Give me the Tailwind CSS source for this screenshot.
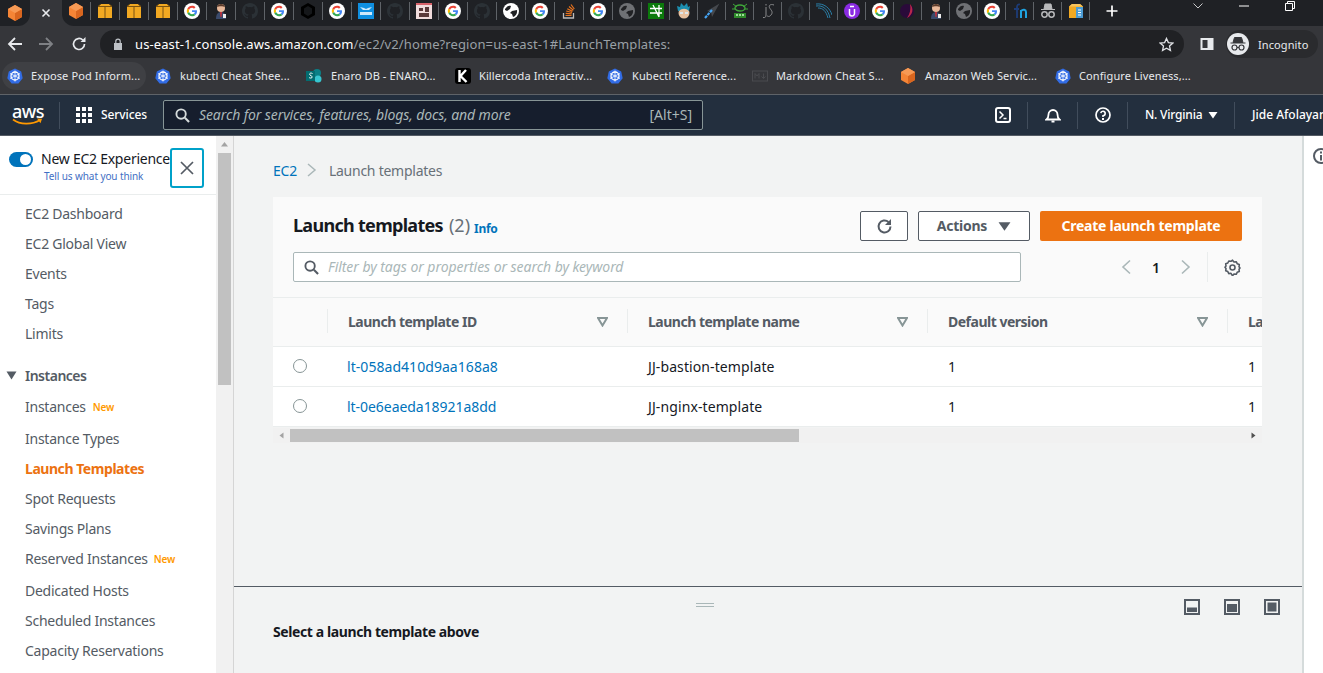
<!DOCTYPE html>
<html lang="en">
<head>
  <meta charset="UTF-8">
  <title>Launch templates | EC2 Management Console</title>
  <script src="https://cdn.jsdelivr.net/npm/@tailwindcss/browser@4"></script>
</head>
<body class="h-screen w-[1323px] overflow-hidden flex flex-col bg-white font-['Noto_Sans',sans-serif]">

  <!-- Icon sheet -->
  <svg class="hidden">
    <symbol id="cube" viewBox="0 0 16 16"><path d="M8 0 15 4v8l-7 4-7-4V4z" fill="#f58536"/><path d="M8 8l7-4v8l-7 4z" fill="#d9661f"/><path d="M8 0l7 4-7 4-7-4z" fill="#f79a55"/></symbol>
    <symbol id="box" viewBox="0 0 16 16"><path d="M1 3.500 4 1h8l3 2.500V15H1z" fill="#f2a922"/><path d="M1 3.500h14M8 3.500V15M4 1 1 3.500M12 1l3 2.500" stroke="#7a5312" stroke-width="1" fill="none"/></symbol>
    <symbol id="boxdoc" viewBox="0 0 16 16"><path d="M1 3.500 4 1h8l3 2.500V15H1z" fill="#f2a922"/><path d="M4 1h8l3 2.500H1z" fill="#f7c35c"/><path d="M8 4h7v11H8z" fill="#4a9bd4"/><path d="M10 7h3M10 9.500h3M10 12h3" stroke="#fff" stroke-width="1"/></symbol>
    <symbol id="g" viewBox="0 0 16 16"><circle cx="8" cy="8" r="8" fill="#fff"/><g transform="translate(2.800 2.800) scale(.217)"><path fill="#EA4335" d="M24 9.500c3.540 0 6.710 1.220 9.210 3.600l6.850-6.850C35.900 2.380 30.470 0 24 0 14.620 0 6.510 5.380 2.560 13.220l7.980 6.190C12.430 13.720 17.740 9.500 24 9.500z"/><path fill="#4285F4" d="M46.980 24.550c0-1.570-.15-3.090-.38-4.550H24v9.020h12.940c-.58 2.960-2.260 5.480-4.780 7.180l7.730 6c4.510-4.180 7.090-10.360 7.090-17.650z"/><path fill="#FBBC05" d="M10.530 28.590c-.48-1.450-.76-2.990-.76-4.590s.27-3.140.76-4.590l-7.980-6.190C.92 16.460 0 20.120 0 24c0 3.880.92 7.540 2.560 10.780l7.970-6.190z"/><path fill="#34A853" d="M24 48c6.480 0 11.930-2.130 15.890-5.810l-7.730-6c-2.150 1.450-4.920 2.300-8.160 2.300-6.260 0-11.570-4.220-13.470-9.910l-7.980 6.190C6.510 42.620 14.620 48 24 48z"/></g></symbol>
    <symbol id="gh" viewBox="0 0 16 16"><path fill="#2b3136" d="M8 0C3.580 0 0 3.580 0 8c0 3.540 2.290 6.530 5.470 7.590.4.070.55-.17.550-.38v-1.340c-2.220.48-2.690-1.070-2.690-1.070-.36-.92-.89-1.170-.89-1.170-.73-.5.050-.49.050-.49.800.06 1.230.82 1.230.82.710 1.220 1.870.87 2.330.66.070-.52.280-.87.510-1.070-1.780-.2-3.640-.89-3.640-3.950 0-.87.310-1.590.82-2.150-.08-.2-.36-1.020.08-2.120 0 0 .67-.21 2.200.82a7.600 7.600 0 0 1 4 0c1.530-1.040 2.200-.82 2.200-.82.44 1.100.16 1.920.08 2.120.51.560.82 1.270.82 2.150 0 3.070-1.870 3.750-3.650 3.950.29.250.54.730.54 1.480v2.190c0 .21.150.46.550.38A8 8 0 0 0 16 8c0-4.420-3.580-8-8-8z"/></symbol>
    <symbol id="globe" viewBox="0 0 16 16"><circle cx="8" cy="8" r="8" fill="#fff"/><path d="M2 6c2-3 4-4 6-3l-1 3-3 2-2-1zM9 8l5-1c.5 3-1 6-4 7l-1-3-2-1z" fill="#202124"/></symbol>
    <symbol id="globeg" viewBox="0 0 16 16"><circle cx="8" cy="8" r="8" fill="#6f7175"/><path d="M2 6c2-3 4-4 6-3l-1 3-3 2-2-1zM9 8l5-1c.5 3-1 6-4 7l-1-3-2-1z" fill="#202124"/></symbol>
    <symbol id="k8s" viewBox="0 0 16 16"><path d="M8 .5 14.200 3.500 15.700 10.200 11.400 15.500H4.600L.3 10.200 1.800 3.500z" fill="#326ce5"/><circle cx="8" cy="8" r="4" fill="none" stroke="#fff" stroke-width="1.300"/><path d="M8 2.500v11M3 5.500l10 5M13 5.500l-10 5" stroke="#fff" stroke-width=".8"/></symbol>
    <symbol id="person" viewBox="0 0 16 16"><circle cx="8" cy="5" r="4" fill="#e8b89a"/><path d="M3 16c0-5 2-7 5-7s5 2 5 7z" fill="#3a4a6b"/><path d="M7 9h2l-.5 5h-1z" fill="#c8303a"/><path d="M4 4c1-4 7-4 8 0-2-1-6-1-8 0z" fill="#5a3a2a"/><path d="M10 11h3v4h-3z" fill="#eee"/></symbol>
  </svg>

  <!-- Tab strip -->
  <div class="flex h-[26px] shrink-0 bg-[#35363a]">
    <div class="w-[30px] bg-[#1f2125] rounded-br-xl flex items-center justify-center"><svg class="size-[16px]"><use href="#cube"/></svg></div>
    <div class="w-[32px] flex items-center justify-center">
      <svg class="size-[10px]" viewBox="0 0 10 10"><path d="M1.500 1.500l7 7M8.500 1.500l-7 7" stroke="#e8eaed" stroke-width="1.600"/></svg>
    </div>
    <div class="flex-1 bg-[#1f2125] rounded-bl-xl flex items-start pt-[1px] relative">
      <div class="w-[29px] h-[18px] mt-[1px] border-r border-[#5f6368] flex items-center justify-center"><svg class="size-[16px]"><use href="#cube"/></svg></div>
      <div class="w-[29px] h-[18px] mt-[1px] border-r border-[#5f6368] flex items-center justify-center"><svg class="size-[16px]"><use href="#box"/></svg></div>
      <div class="w-[29px] h-[18px] mt-[1px] border-r border-[#5f6368] flex items-center justify-center"><svg class="size-[16px]"><use href="#box"/></svg></div>
      <div class="w-[29px] h-[18px] mt-[1px] border-r border-[#5f6368] flex items-center justify-center"><svg class="size-[16px]"><use href="#box"/></svg></div>
      <div class="w-[29px] h-[18px] mt-[1px] border-r border-[#5f6368] flex items-center justify-center"><svg class="size-[16px]"><use href="#g"/></svg></div>
      <div class="w-[29px] h-[18px] mt-[1px] border-r border-[#5f6368] flex items-center justify-center"><svg class="size-[16px]"><use href="#person"/></svg></div>
      <div class="w-[29px] h-[18px] mt-[1px] border-r border-[#5f6368] flex items-center justify-center"><svg class="size-[16px]"><use href="#gh"/></svg></div>
      <div class="w-[29px] h-[18px] mt-[1px] border-r border-[#5f6368] flex items-center justify-center"><svg class="size-[16px]"><use href="#g"/></svg></div>
      <div class="w-[29px] h-[18px] mt-[1px] border-r border-[#5f6368] flex items-center justify-center"><svg class="size-[16px]" viewBox="0 0 16 16"><path d="M8 0l7 4v8l-7 4-7-4V4z" fill="#000"/><path d="M8 3l4 2.500v5L8 13l-4-2.500v-5z" fill="#15171a"/></svg></div>
      <div class="w-[29px] h-[18px] mt-[1px] border-r border-[#5f6368] flex items-center justify-center"><svg class="size-[16px]"><use href="#g"/></svg></div>
      <div class="w-[29px] h-[18px] mt-[1px] border-r border-[#5f6368] flex items-center justify-center"><svg class="size-[16px]" viewBox="0 0 16 16"><path d="M0 0h16v16H0z" fill="#0f8fe0"/><path d="M2 4l4 1 2 1 2-1 4-1-3 3H5zM2 9h12v3H2z" fill="#cfe9fa"/></svg></div>
      <div class="w-[29px] h-[18px] mt-[1px] border-r border-[#5f6368] flex items-center justify-center"><svg class="size-[16px]"><use href="#gh"/></svg></div>
      <div class="w-[29px] h-[18px] mt-[1px] border-r border-[#5f6368] flex items-center justify-center"><svg class="size-[16px]" viewBox="0 0 16 16"><path d="M0 0h16v16H0z" fill="#f0dcdc"/><path d="M3 5h4v3H3zM9 4h4v5H9zM3 10h10v4H3z" fill="#5a3a3a"/><path d="M0 0h16v2H0z" fill="#d8636b"/></svg></div>
      <div class="w-[29px] h-[18px] mt-[1px] border-r border-[#5f6368] flex items-center justify-center"><svg class="size-[16px]"><use href="#g"/></svg></div>
      <div class="w-[29px] h-[18px] mt-[1px] border-r border-[#5f6368] flex items-center justify-center"><svg class="size-[16px]"><use href="#gh"/></svg></div>
      <div class="w-[29px] h-[18px] mt-[1px] border-r border-[#5f6368] flex items-center justify-center"><svg class="size-[16px]"><use href="#globe"/></svg></div>
      <div class="w-[29px] h-[18px] mt-[1px] border-r border-[#5f6368] flex items-center justify-center"><svg class="size-[16px]"><use href="#g"/></svg></div>
      <div class="w-[29px] h-[18px] mt-[1px] border-r border-[#5f6368] flex items-center justify-center"><svg class="size-[16px]" viewBox="0 0 16 16"><path d="M2.500 10v5h10v-5" fill="none" stroke="#bcbbbb" stroke-width="1.300"/><path d="M4.500 12.500h6M4.700 10.300l6 .6M5.200 8l5.800 1.500M6.300 5.700l5.200 2.700M8 3.500l4.400 3.700M10 1.500l3.300 4.500" stroke="#e8731e" stroke-width="1.200"/></svg></div>
      <div class="w-[29px] h-[18px] mt-[1px] border-r border-[#5f6368] flex items-center justify-center"><svg class="size-[16px]"><use href="#g"/></svg></div>
      <div class="w-[29px] h-[18px] mt-[1px] border-r border-[#5f6368] flex items-center justify-center"><svg class="size-[16px]"><use href="#globeg"/></svg></div>
      <div class="w-[28px] h-[18px] mt-[1px] border-r border-[#5f6368] flex items-center justify-center"><svg class="size-[16px]" viewBox="0 0 16 16"><path d="M0 0h16v16H0z" fill="#0b7a0b"/><path d="M2 5.500h12M2 10h12M5 2l6 12M11 2v12" stroke="#fff" stroke-width="1.300"/></svg></div>
      <div class="w-[28px] h-[18px] mt-[1px] border-r border-[#5f6368] flex items-center justify-center"><svg class="size-[16px]" viewBox="0 0 16 16"><circle cx="8" cy="10" r="5.500" fill="#e9c2a0"/><path d="M2 8 1 3l3 1 1-4 3 3 3-3 1 4 2-1-1 5c-3-3-7-3-10 0z" fill="#1c8fb0"/><path d="M4 9h3v2H4zM9 9h3v2H9z" fill="#dfe6ea"/></svg></div>
      <div class="w-[28px] h-[18px] mt-[1px] border-r border-[#5f6368] flex items-center justify-center"><svg class="size-[16px]" viewBox="0 0 16 16"><path d="M15.500 .5 8 14 7 9 3 8z" fill="#45484d"/><path d="M1 15l7-8" stroke="#45a5f5" stroke-width="2.200" stroke-dasharray="3 .8"/></svg></div>
      <div class="w-[28px] h-[18px] mt-[1px] border-r border-[#5f6368] flex items-center justify-center"><svg class="size-[16px]" viewBox="0 0 16 16"><ellipse cx="8" cy="5" rx="5" ry="3" fill="none" stroke="#3fa63a" stroke-width="1.400"/><path d="M1 1l4 3M15 1l-4 3M0 6h3M13 6h3" stroke="#3fa63a"/><path d="M2 10h12v5H2z" fill="#2f8a2b"/><path d="M4 12h8" stroke="#9fdc9a" stroke-width="2" stroke-dasharray="2 1"/></svg></div>
      <div class="w-[28px] h-[18px] mt-[1px] border-r border-[#5f6368] flex items-center justify-center"><svg class="size-[16px]" viewBox="0 0 16 16"><path d="M6 4v8c0 2-1 3-3 2.500M6 1v1.500M14 2c-4-1.500-6 1-4 3.500s3 4 1 6.500-3 1-4 1" fill="none" stroke="#8c8d8f" stroke-width="1"/></svg></div>
      <div class="w-[28px] h-[18px] mt-[1px] border-r border-[#5f6368] flex items-center justify-center"><svg class="size-[16px]"><use href="#gh"/></svg></div>
      <div class="w-[28px] h-[18px] mt-[1px] border-r border-[#5f6368] flex items-center justify-center"><svg class="size-[16px]" viewBox="0 0 16 16"><path d="M0 3c7-1 12 3 14 12M0 1c8-1 14 4 16 11M2 5c5 0 8 3 10 10" fill="none" stroke="#2a7fa8" stroke-width="1"/></svg></div>
      <div class="w-[28px] h-[18px] mt-[1px] border-r border-[#5f6368] flex items-center justify-center"><svg class="size-[16px]" viewBox="0 0 16 16"><circle cx="8" cy="8" r="8" fill="#8a2be2"/><path d="M5.500 6v4.500a2.500 2.500 0 0 0 5 0V6M6 3.500h4" fill="none" stroke="#fff" stroke-width="1.500"/></svg></div>
      <div class="w-[28px] h-[18px] mt-[1px] border-r border-[#5f6368] flex items-center justify-center"><svg class="size-[16px]"><use href="#g"/></svg></div>
      <div class="w-[28px] h-[18px] mt-[1px] border-r border-[#5f6368] flex items-center justify-center"><svg class="size-[16px]" viewBox="0 0 16 16"><circle cx="7" cy="8" r="7" fill="#2a0a3a"/><path d="M10 1c4 4 3 11-3 14 3-4 4-9 3-14z" fill="#b8264c"/></svg></div>
      <div class="w-[28px] h-[18px] mt-[1px] border-r border-[#5f6368] flex items-center justify-center"><svg class="size-[16px]"><use href="#person"/></svg></div>
      <div class="w-[28px] h-[18px] mt-[1px] border-r border-[#5f6368] flex items-center justify-center"><svg class="size-[16px]"><use href="#globeg"/></svg></div>
      <div class="w-[28px] h-[18px] mt-[1px] border-r border-[#5f6368] flex items-center justify-center"><svg class="size-[16px]"><use href="#g"/></svg></div>
      <div class="w-[28px] h-[18px] mt-[1px] border-r border-[#5f6368] flex items-center justify-center"><svg class="size-[16px]" viewBox="0 0 16 16"><path d="M5 15V4c0-2 1-3 3-2.500M2 6h5" fill="none" stroke="#1d3c78" stroke-width="1.800"/><path d="M9 15V7M9 8c2-2 5-1.500 5 1v6" fill="none" stroke="#1fa3e0" stroke-width="2"/></svg></div>
      <div class="w-[28px] h-[18px] mt-[1px] border-r border-[#5f6368] flex items-center justify-center"><svg class="size-[16px]" viewBox="0 0 16 16"><path d="M4 6l1-5h6l1 5zM1 6.500h14" stroke="#b9babc" fill="#b9babc"/><circle cx="4.500" cy="11.500" r="2.700" fill="none" stroke="#b9babc" stroke-width="1.500"/><circle cx="11.500" cy="11.500" r="2.700" fill="none" stroke="#b9babc" stroke-width="1.500"/></svg></div>
      <div class="w-[28px] h-[18px] mt-[1px] border-r border-[#5f6368] flex items-center justify-center"><svg class="size-[16px]"><use href="#boxdoc"/></svg></div>
      <div class="ml-[16px] h-[20px] flex items-center"><svg class="size-[12px]" viewBox="0 0 12 12"><path d="M6 .5v11M.5 6h11" stroke="#fff" stroke-width="1.700"/></svg></div>
      <div class="flex-1"></div>
      <svg class="size-[10px] mr-[36px]" viewBox="0 0 10 10"><path d="M.5 2.500 5 7l4.500-4.500" fill="none" stroke="#c8c9cb" stroke-width="1"/></svg>
      <svg class="size-[10px] mr-[36px]" viewBox="0 0 10 10"><path d="M0 5h10" stroke="#fff" stroke-width="1"/></svg>
      <svg class="size-[10px] mr-[28px]" viewBox="0 0 10 10"><path d="M.5 2.500h7v7h-7zM2.500 2.500v-2h7v7h-2" fill="none" stroke="#fff" stroke-width="1"/></svg>
    </div>
  </div>

  <!-- Browser toolbar -->
  <div class="flex items-center h-[36px] shrink-0 bg-[#35363a]">
    <svg class="size-[16px] shrink-0 ml-[7px]" viewBox="0 0 16 16"><path d="M15 8H2M8 2 2 8l6 6" fill="none" stroke="#e8eaed" stroke-width="1.800"/></svg>
    <svg class="size-[16px] shrink-0 ml-[15px]" viewBox="0 0 16 16"><path d="M1 8h13M8 2l6 6-6 6" fill="none" stroke="#7f8185" stroke-width="1.800"/></svg>
    <svg class="size-[16px] shrink-0 ml-[17px]" viewBox="0 0 16 16"><path d="M13.500 8a5.500 5.500 0 1 1-1.700-4" fill="none" stroke="#e8eaed" stroke-width="1.700"/><path d="M14.500 1v5h-5z" fill="#e8eaed"/></svg>
    <div class="ml-[13px] w-[1084px] shrink-0 h-[28px] rounded-full bg-[#202124] flex items-center">
      <svg class="size-[12px] ml-[12px]" viewBox="0 0 12 12"><path d="M2 5h8v7H2z" fill="#bdc1c6"/><path d="M3.800 5V3.300a2.200 2.200 0 0 1 4.400 0V5" fill="none" stroke="#bdc1c6" stroke-width="1.200"/></svg>
      <span class="ml-[11px] text-[13px] tracking-[0.1px] leading-none whitespace-nowrap text-white">us-east-1.console.aws.amazon.com<span class="text-[#9aa0a6]">/ec2/v2/home?region=us-east-1#LaunchTemplates:</span></span>
      <div class="flex-1"></div>
      <svg class="size-[15px] mr-[10px]" viewBox="0 0 16 16"><path d="M8 1.500l2 4.400 4.800.5-3.600 3.200 1 4.700L8 12l-4.200 2.300 1-4.700L1.200 6.400 6 5.900z" fill="none" stroke="#dfe1e5" stroke-width="1.400"/></svg>
    </div>
    <svg class="size-[14px] shrink-0 ml-[16px]" viewBox="0 0 14 14"><path d="M.5 1h13v12H.5z" fill="#e8eaed"/><path d="M2.500 3h5v8h-5z" fill="#35363a"/></svg>
    <div class="ml-[12px] w-[92px] shrink-0 h-[28px] rounded-full bg-[#2a2b2e] flex items-center">
      <svg class="size-[22px] ml-[1px]" viewBox="0 0 22 22"><circle cx="11" cy="11" r="11" fill="#e8eaed"/><path d="M6 9.500l1.500-5h7L16 9.500zM3.500 10h15" stroke="#35363a" stroke-width="1" fill="#35363a"/><circle cx="7.500" cy="14.500" r="2.500" fill="none" stroke="#35363a" stroke-width="1.200"/><circle cx="14.500" cy="14.500" r="2.500" fill="none" stroke="#35363a" stroke-width="1.200"/><path d="M10 14.500h2" stroke="#35363a"/></svg>
      <span class="ml-[9px] text-[11px] tracking-[0.1px] text-[#e8eaed] leading-none">Incognito</span>
    </div>
  </div>

  <!-- Bookmarks bar -->
  <div class="flex items-center h-[33px] pb-[4px] shrink-0 bg-[#35363a] text-[11px] tracking-[0.1px] text-[#e8eaed] whitespace-nowrap border-b border-[#5f6368]">
    <div class="ml-[2px] w-[144px] h-[28px] rounded-full bg-[#3f4044] flex items-center">
      <svg class="size-[16px] ml-[5px]"><use href="#k8s"/></svg>
      <span class="ml-[8px]">Expose Pod Inform...</span>
    </div>
    <svg class="size-[16px] ml-[9px] shrink-0"><use href="#k8s"/></svg>
    <span class="ml-[9px] w-[126px]">kubectl Cheat Shee...</span>
    <svg class="size-[16px] shrink-0" viewBox="0 0 16 16"><circle cx="11" cy="5" r="4" fill="#0b7f86"/><circle cx="12" cy="11" r="3.500" fill="#37c6d0"/><path d="M0 3h9v10H0z" fill="#036c70"/><path d="M6.500 5.500c-2-1-3.500 0-2.500 1.500s3 1 2 2.500c-1 1-2.500.5-3-.2" fill="none" stroke="#fff" stroke-width="1"/></svg>
    <span class="ml-[9px] w-[124px]">Enaro DB - ENARO...</span>
    <svg class="size-[16px] shrink-0" viewBox="0 0 16 16"><rect width="16" height="16" rx="3" fill="#000"/><path d="M4.500 2v12M11 2 5.500 8l6 6" fill="none" stroke="#fff" stroke-width="2.400"/></svg>
    <span class="ml-[8px] w-[128px]">Killercoda Interactiv...</span>
    <svg class="size-[16px] shrink-0"><use href="#k8s"/></svg>
    <span class="ml-[9px] w-[120px]">Kubectl Reference...</span>
    <svg class="size-[16px] shrink-0" viewBox="0 0 16 16"><rect x=".5" y="3" width="15" height="10" fill="none" stroke="#4a4b4f"/><path d="M3 10.500v-5l2 2.500 2-2.500v5M11.500 5.500v5M9.500 8.500l2 2 2-2" fill="none" stroke="#4a4b4f"/></svg>
    <span class="ml-[8px] w-[124px]">Markdown Cheat S...</span>
    <svg class="size-[16px] shrink-0"><use href="#cube"/></svg>
    <span class="ml-[9px] w-[130px]">Amazon Web Servic...</span>
    <svg class="size-[16px] shrink-0"><use href="#k8s"/></svg>
    <span class="ml-[8px]">Configure Liveness,...</span>
  </div>

  <!-- AWS console nav -->
  <nav class="flex items-center h-[41px] shrink-0 overflow-hidden bg-[#232f3e] border-b border-[#545b64] text-white">
    <div class="ml-[12px] w-[32px] shrink-0 h-[30px] relative">
      <span class="block text-[18px] leading-[20px] tracking-[-0.5px] font-medium text-white mt-[1px]">aws</span>
      <svg class="absolute left-0 top-[18px] w-[31px] h-[9px]" viewBox="0 0 31 9"><path d="M1 1.500c7 5.500 19 5.500 27 .5" fill="none" stroke="#ff9900" stroke-width="1.700"/><path d="M25 .5l5 .3-1.500 4.500z" fill="#ff9900"/></svg>
    </div>
    <div class="ml-[15px] w-px h-[27px] shrink-0 bg-[#414d5c]"></div>
    <svg class="size-[16px] shrink-0 ml-[16px]" viewBox="0 0 16 16" fill="#fff"><path d="M0 0h4v4H0zM6 0h4v4H6zM12 0h4v4h-4zM0 6h4v4H0zM6 6h4v4H6zM12 6h4v4h-4zM0 12h4v4H0zM6 12h4v4H6zM12 12h4v4h-4z"/></svg>
    <span class="ml-[9px] w-[45px] shrink-0 text-[12px] font-medium tracking-[-0.1px]">Services</span>
    <div class="ml-[17px] w-[540px] shrink-0 h-[30px] bg-[#161e2d] border border-[#879596] rounded-[2px] flex items-center">
      <svg class="size-[15px] ml-[11px]" viewBox="0 0 16 16"><circle cx="6.500" cy="6.500" r="5" fill="none" stroke="#d5dbdb" stroke-width="2"/><path d="M10.500 10.500 15 15" stroke="#d5dbdb" stroke-width="2.200"/></svg>
      <span class="ml-[9px] pb-[2px] text-[14px] italic tracking-[-0.1px] text-[#aab7b8]">Search for services, features, blogs, docs, and more</span>
      <div class="flex-1"></div>
      <span class="mr-[10px] pb-[1px] text-[14px] text-[#aab7b8]">[Alt+S]</span>
    </div>
    <svg class="size-[16px] shrink-0 ml-[292px]" viewBox="0 0 16 16"><rect x="1" y="1" width="14" height="14" rx="2" fill="none" stroke="#fff" stroke-width="2"/><path d="M4.500 4.500 8 8l-3.500 3.500M8.500 11.500h3" fill="none" stroke="#fff" stroke-width="1.500"/></svg>
    <div class="ml-[16px] w-px h-[27px] shrink-0 bg-[#414d5c]"></div>
    <svg class="size-[16px] shrink-0 ml-[17px]" viewBox="0 0 16 16"><path d="M1.500 12.500c2-1.500 2-3 2-5a4.500 4.500 0 0 1 9 0c0 2 0 3.500 2 5z" fill="none" stroke="#fff" stroke-width="1.800"/><path d="M6.500 14.500h3" stroke="#fff" stroke-width="2"/></svg>
    <div class="ml-[16px] w-px h-[27px] shrink-0 bg-[#414d5c]"></div>
    <svg class="size-[16px] shrink-0 ml-[17px]" viewBox="0 0 16 16"><circle cx="8" cy="8" r="7" fill="none" stroke="#fff" stroke-width="1.700"/><path d="M5.800 6.200A2.200 2.200 0 1 1 8 8.700v1.300" fill="none" stroke="#fff" stroke-width="1.600"/><path d="M7 11h2v2H7z" fill="#fff"/></svg>
    <div class="ml-[16px] w-px h-[27px] shrink-0 bg-[#414d5c]"></div>
    <span class="ml-[17px] w-[57px] shrink-0 text-[12px] font-medium tracking-[-0.2px] whitespace-nowrap">N. Virginia</span>
    <svg class="size-[10px] shrink-0 ml-[6px]" viewBox="0 0 10 10"><path d="M.5 2h9L5 8.500z" fill="#fff"/></svg>
    <div class="ml-[16px] w-px h-[27px] shrink-0 bg-[#414d5c]"></div>
    <span class="ml-[17px] shrink-0 text-[12px] font-medium whitespace-nowrap">Jide Afolayan</span>
  </nav>

  <!-- Page body -->
  <div class="flex flex-1 min-h-0">

    <!-- Left nav -->
    <aside class="w-[216px] shrink-0 overflow-hidden text-[14px] tracking-[-0.25px] text-[#545b64]">
      <div class="relative h-[59px] border-b border-[#eaeded]">
        <div class="flex items-center pt-[14px] pl-[9px]">
          <div class="w-[24px] h-[15px] rounded-full bg-[#0073bb] flex items-center justify-end pr-[2px]"><div class="size-[11px] rounded-full bg-white"></div></div>
          <span class="ml-[8px] text-[#16191f] leading-[18px] whitespace-nowrap">New EC2 Experience</span>
        </div>
        <div class="ml-[44px] mt-[1px] text-[10px] tracking-[-0.1px] leading-[14px] text-[#3f6fc4]">Tell us what you think</div>
        <button class="absolute left-[170px] top-[12px] w-[34px] h-[40px] border-2 border-[#00a1c9] rounded-[3px] bg-white flex items-center justify-center">
          <svg class="size-[14px]" viewBox="0 0 14 14"><path d="M1 1l12 12M13 1 1 13" stroke="#545b64" stroke-width="1.700"/></svg>
        </button>
      </div>
      <div class="pl-[25px] pt-[3px]">
        <div class="h-[30px] flex items-center">EC2 Dashboard</div>
        <div class="h-[30px] flex items-center">EC2 Global View</div>
        <div class="h-[30px] flex items-center">Events</div>
        <div class="h-[30px] flex items-center">Tags</div>
        <div class="h-[30px] flex items-center">Limits</div>
      </div>
      <div class="flex items-center h-[30px] mt-[12px] pl-[6px] font-semibold tracking-[-0.5px]">
        <svg class="size-[11px]" viewBox="0 0 11 11"><path d="M.5 1.500h10L5.500 9.500z" fill="#545b64"/></svg>
        <span class="ml-[8px]">Instances</span>
      </div>
      <div class="pl-[25px] pt-[1px]">
        <div class="h-[30px] flex items-center">Instances<span class="ml-[7px] mt-[3px] text-[10px] tracking-[-0.2px] font-semibold text-[#ff9900]">New</span></div>
        <div class="h-[32px] pt-[2px] flex items-center">Instance Types</div>
        <div class="h-[30px] flex items-center font-bold tracking-[-0.45px] text-[#ec7211]">Launch Templates</div>
        <div class="h-[30px] flex items-center">Spot Requests</div>
        <div class="h-[30px] flex items-center">Savings Plans</div>
        <div class="h-[30px] flex items-center">Reserved Instances<span class="ml-[6px] mt-[3px] text-[10px] tracking-[-0.2px] font-semibold text-[#ff9900]">New</span></div>
        <div class="h-[32px] flex items-center pt-[2px]">Dedicated Hosts</div>
        <div class="h-[30px] flex items-center">Scheduled Instances</div>
        <div class="h-[30px] flex items-center">Capacity Reservations</div>
      </div>
    </aside>

    <!-- Nav scrollbar -->
    <div class="w-[18px] shrink-0 bg-[#f1f1f1] border-r border-[#d5d5d5] flex flex-col items-center">
      <svg class="size-[9px] mt-[4px]" viewBox="0 0 9 9"><path d="M4.500 2 8 6.500H1z" fill="#a3a3a3"/></svg>
      <div class="w-[13px] h-[232px] mt-[4px] bg-[#c1c1c1]"></div>
      <div class="flex-1"></div>
      <svg class="size-[9px] mb-[-8px]" viewBox="0 0 9 9"><path d="M1 1h7L4.500 6z" fill="#505050"/></svg>
    </div>

    <!-- Main column -->
    <main class="flex-1 min-w-0 flex flex-col bg-[#f2f3f3]">
      <div class="h-[450px] shrink-0 pl-[39px] pr-[40px]">
        <div class="h-[61px] pt-[7px] flex items-center text-[14px] tracking-[-0.25px]">
          <span class="text-[#0073bb]">EC2</span>
          <svg class="w-[12px] h-[14px] ml-[9px]" viewBox="0 0 12 14"><path d="M2 1l7 6-7 6" fill="none" stroke="#aab7b8" stroke-width="1.500"/></svg>
          <span class="ml-[11px] text-[#687078]">Launch templates</span>
        </div>

        <div class="bg-[#fafafa]">
          <!-- Table header panel -->
          <div class="h-[101px] border-b border-[#eaeded] px-[20px] pt-[14px]">
            <div class="flex items-center h-[30px]">
              <h1 class="mb-[1px] text-[18px] font-bold tracking-[-0.7px] text-[#16191f] whitespace-nowrap">Launch templates</h1>
              <span class="mb-[1px] ml-[6px] text-[18px] text-[#687078]">(2)</span>
              <span class="mt-[6px] ml-[4px] text-[12px] font-bold tracking-[-0.3px] text-[#0073bb]">Info</span>
              <div class="flex-1"></div>
              <button class="w-[48px] h-[30px] bg-white border border-[#545b64] rounded-[2px] flex items-center justify-center">
                <svg class="size-[17px]" viewBox="0 0 17 17"><path d="M14.500 8.500a6 6 0 1 1-2-4.500" fill="none" stroke="#545b64" stroke-width="2"/><path d="M15 1v6H9z" fill="#545b64"/></svg>
              </button>
              <button class="ml-[10px] w-[112px] h-[30px] pb-[1px] bg-white border border-[#545b64] rounded-[2px] flex items-center justify-center text-[14px] font-bold tracking-[-0.25px] text-[#545b64]">
                Actions
                <svg class="size-[13px] ml-[11px] mt-[1px]" viewBox="0 0 12 12"><path d="M.5 2h11L6 10z" fill="#545b64"/></svg>
              </button>
              <button class="ml-[10px] w-[202px] h-[30px] pb-[1px] bg-[#ec7211] rounded-[2px] text-[14px] font-bold tracking-[-0.25px] text-white">Create launch template</button>
            </div>
            <div class="flex items-center h-[30px] mt-[11px]">
              <div class="w-[728px] shrink-0 h-[30px] bg-white border border-[#aab7b8] rounded-[2px] flex items-center">
                <svg class="size-[15px] ml-[10px]" viewBox="0 0 16 16"><circle cx="6.500" cy="6.500" r="5" fill="none" stroke="#545b64" stroke-width="2"/><path d="M10.500 10.500 15 15" stroke="#545b64" stroke-width="2.200"/></svg>
                <span class="ml-[9px] pb-[2px] text-[14px] italic tracking-[-0.05px] text-[#aab7b8]">Filter by tags or properties or search by keyword</span>
              </div>
              <svg class="w-[12px] h-[16px] ml-[99px]" viewBox="0 0 12 16"><path d="M10 1.500 3 8l7 6.500" fill="none" stroke="#aab7b8" stroke-width="1.600"/></svg>
              <span class="ml-[19px] w-[10px] text-center text-[14px] font-semibold text-[#16191f]">1</span>
              <svg class="w-[12px] h-[16px] ml-[19px]" viewBox="0 0 12 16"><path d="M2 1.500 9 8l-7 6.500" fill="none" stroke="#aab7b8" stroke-width="1.600"/></svg>
              <div class="ml-[15px] w-px h-[30px] bg-[#eaeded]"></div>
              <svg class="size-[17px] ml-[16px]" viewBox="0 0 17 17"><path d="M8.500 1.200 10 3l2.200-.3 1 2 2.100.8-.3 2.300 1 1.200-1 1.200.3 2.300-2.100.8-1 2-2.200-.3-1.500 1.800L7 14.300l-2.200.3-1-2-2.100-.8.3-2.300L1 8.300l1-1.200-.3-2.300 2.100-.8 1-2L7 2.300z" fill="none" stroke="#545b64" stroke-width="1.600" stroke-linejoin="round"/><circle cx="8.500" cy="8.500" r="2.500" fill="none" stroke="#545b64" stroke-width="1.600"/></svg>
            </div>
          </div>

          <!-- Table -->
          <div class="overflow-hidden">
            <div class="flex h-[49px] pb-[2px] border-b border-[#eaeded] text-[14px] font-bold tracking-[-0.5px] text-[#545b64] whitespace-nowrap">
              <div class="w-[55px] shrink-0 flex items-center justify-end"><div class="w-px h-[24px] bg-[#eaeded]"></div></div>
              <div class="w-[300px] shrink-0 flex items-center pl-[20px]"><span class="flex-1">Launch template ID</span><svg class="size-[11px] mr-[19px]" viewBox="0 0 11 11"><path d="M1 2h9L5.500 9.500z" fill="none" stroke="#879596" stroke-width="2"/></svg><div class="w-px h-[24px] bg-[#eaeded]"></div></div>
              <div class="w-[300px] shrink-0 flex items-center pl-[20px]"><span class="flex-1">Launch template name</span><svg class="size-[11px] mr-[19px]" viewBox="0 0 11 11"><path d="M1 2h9L5.500 9.500z" fill="none" stroke="#879596" stroke-width="2"/></svg><div class="w-px h-[24px] bg-[#eaeded]"></div></div>
              <div class="w-[300px] shrink-0 flex items-center pl-[20px]"><span class="flex-1">Default version</span><svg class="size-[11px] mr-[19px]" viewBox="0 0 11 11"><path d="M1 2h9L5.500 9.500z" fill="none" stroke="#879596" stroke-width="2"/></svg><div class="w-px h-[24px] bg-[#eaeded]"></div></div>
              <div class="w-[300px] shrink-0 flex items-center pl-[20px]">Latest version</div>
            </div>
            <div class="flex h-[40px] bg-white border-b border-[#eaeded] text-[14px] text-[#16191f] whitespace-nowrap">
              <div class="w-[54px] shrink-0 flex items-center pl-[20px] pb-[2px]"><div class="size-[14px] rounded-full border border-[#879596] bg-white"></div></div>
              <div class="w-[300px] shrink-0 flex items-center pl-[20px] tracking-[0.05px] text-[#0073bb]">lt-058ad410d9aa168a8</div>
              <div class="w-[300px] shrink-0 flex items-center pl-[21px] tracking-[0.1px]">JJ-bastion-template</div>
              <div class="w-[300px] shrink-0 flex items-center pl-[21px]">1</div>
              <div class="w-[300px] shrink-0 flex items-center pl-[21px]">1</div>
            </div>
            <div class="flex h-[40px] bg-white border-b border-[#eaeded] text-[14px] text-[#16191f] whitespace-nowrap">
              <div class="w-[54px] shrink-0 flex items-center pl-[20px] pb-[2px]"><div class="size-[14px] rounded-full border border-[#879596] bg-white"></div></div>
              <div class="w-[300px] shrink-0 flex items-center pl-[20px] tracking-[-0.05px] text-[#0073bb]">lt-0e6eaeda18921a8dd</div>
              <div class="w-[300px] shrink-0 flex items-center pl-[21px] tracking-[0.1px]">JJ-nginx-template</div>
              <div class="w-[300px] shrink-0 flex items-center pl-[21px]">1</div>
              <div class="w-[300px] shrink-0 flex items-center pl-[21px]">1</div>
            </div>
          </div>
        </div>

        <!-- Table scrollbar -->
        <div class="flex items-center h-[15px] mt-[1px] bg-[#f1f1f1]">
          <svg class="size-[7px] ml-[5px]" viewBox="0 0 7 7"><path d="M5.500.5v6L1.500 3.500z" fill="#a3a3a3"/></svg>
          <div class="w-[509px] h-[13px] ml-[5px] bg-[#c1c1c1]"></div>
          <div class="flex-1"></div>
          <svg class="size-[7px] mr-[5px]" viewBox="0 0 7 7"><path d="M1.500.5v6l4-3z" fill="#505050"/></svg>
        </div>
      </div>

      <!-- Split panel -->
      <div class="flex-1 relative border-t border-[#545b64] pl-[39px] pt-[34px] text-[14px] font-bold tracking-[-0.4px] text-[#16191f]">
        <div class="absolute left-[462px] top-[16px] w-[18px] h-[4px] border-y border-[#aab7b8]"></div>
        <div class="absolute right-[22px] top-[12px] flex gap-[24px]">
          <svg class="size-[16px]" viewBox="0 0 16 16"><rect x="1" y="1" width="14" height="14" fill="#f2f3f3" stroke="#545b64" stroke-width="2"/><path d="M3 8.500h10V13H3z" fill="#545b64"/></svg>
          <svg class="size-[16px]" viewBox="0 0 16 16"><rect x="1" y="1" width="14" height="14" fill="#f2f3f3" stroke="#545b64" stroke-width="2"/><path d="M3 5h10v8H3z" fill="#545b64"/></svg>
          <svg class="size-[16px]" viewBox="0 0 16 16"><rect x="1" y="1" width="14" height="14" fill="#f2f3f3" stroke="#545b64" stroke-width="2"/><path d="M3.500 3.500h9v9h-9z" fill="#545b64"/></svg>
        </div>
        Select a launch template above
      </div>
    </main>

    <!-- Tools rail -->
    <div class="w-[21px] shrink-0 bg-white border-l-2 border-[#d5dbdb] overflow-hidden pt-[12px] pl-[9px]">
      <svg class="size-[16px] max-w-none" viewBox="0 0 16 16"><circle cx="8" cy="8" r="7" fill="none" stroke="#545b64" stroke-width="2"/><path d="M7 3.500h2v2H7zM7 7h2v5.500H7z" fill="#545b64"/></svg>
    </div>
  </div>
</body>
</html>
